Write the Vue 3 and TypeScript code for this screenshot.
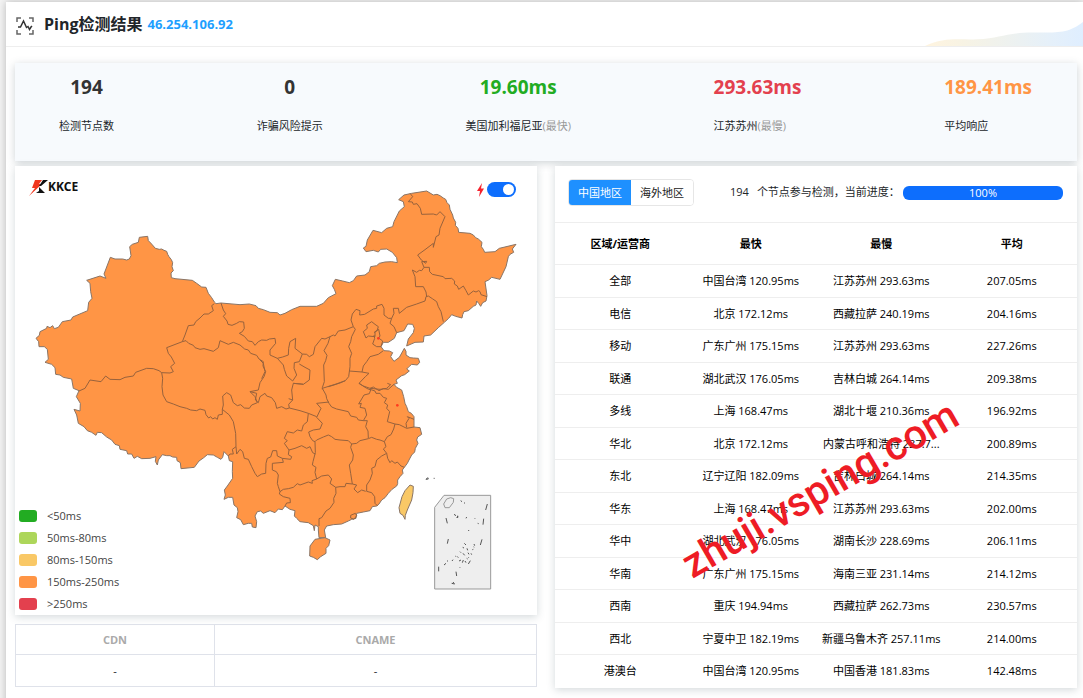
<script setup lang="ts">
import { ref } from 'vue'

interface Stat { value: string; label: string; note?: string; tone: string; align: string }
interface Row { region: string; fast: string; slow: string; avg: string }

const stats: Stat[] = [
  { value: '194', label: '检测节点数', tone: 'dark', align: 'center' },
  { value: '0', label: '诈骗风险提示', tone: 'dark', align: 'center' },
  { value: '19.60ms', label: '美国加利福尼亚', note: '(最快)', tone: 'green', align: 'center' },
  { value: '293.63ms', label: '江苏苏州', note: '(最慢)', tone: 'red', align: 'start' },
  { value: '189.41ms', label: '平均响应', tone: 'orange', align: 'start' },
]

const rows: Row[] = [
  { region: '全部', fast: '中国台湾 120.95ms', slow: '江苏苏州 293.63ms', avg: '207.05ms' },
  { region: '电信', fast: '北京 172.12ms', slow: '西藏拉萨 240.19ms', avg: '204.16ms' },
  { region: '移动', fast: '广东广州 175.15ms', slow: '江苏苏州 293.63ms', avg: '227.26ms' },
  { region: '联通', fast: '湖北武汉 176.05ms', slow: '吉林白城 264.14ms', avg: '209.38ms' },
  { region: '多线', fast: '上海 168.47ms', slow: '湖北十堰 210.36ms', avg: '196.92ms' },
  { region: '华北', fast: '北京 172.12ms', slow: '内蒙古呼和浩特 237.7...', avg: '200.89ms' },
  { region: '东北', fast: '辽宁辽阳 182.09ms', slow: '吉林白城 264.14ms', avg: '214.35ms' },
  { region: '华东', fast: '上海 168.47ms', slow: '江苏苏州 293.63ms', avg: '202.00ms' },
  { region: '华中', fast: '湖北武汉 176.05ms', slow: '湖南长沙 228.69ms', avg: '206.11ms' },
  { region: '华南', fast: '广东广州 175.15ms', slow: '海南三亚 231.14ms', avg: '214.12ms' },
  { region: '西南', fast: '重庆 194.94ms', slow: '西藏拉萨 262.73ms', avg: '230.57ms' },
  { region: '西北', fast: '宁夏中卫 182.19ms', slow: '新疆乌鲁木齐 257.11ms', avg: '214.00ms' },
  { region: '港澳台', fast: '中国台湾 120.95ms', slow: '中国香港 181.83ms', avg: '142.48ms' },
]

const legend = [
  { text: '<50ms', tone: 'l1' },
  { text: '50ms-80ms', tone: 'l2' },
  { text: '80ms-150ms', tone: 'l3' },
  { text: '150ms-250ms', tone: 'l4' },
  { text: '>250ms', tone: 'l5' },
]

const area = ref<'cn' | 'abroad'>('cn')
const live = ref(true)

const outline =
  'M418 712L443 709 445 722 452 729 460 738 466 745 478 748 485 747 492 751 500 754 503 763 507 770 514 779 518 788 516 800 520 812 513 819 514 833 525 836 577 841 590 850 605 861 618 862 625 880 635 893 643 906 648 911 663 909 720 914 748 912 768 917 775 925 790 929 810 937 832 938 840 945 855 940 875 929 900 919 950 919 970 910 985 893 1008 881 1003 868 997 857 1006 838 1028 843 1048 848 1060 842 1070 828 1095 825 1108 815 1112 800 1130 797 1138 790 1155 786 1175 785 1192 788 1190 773 1177 757 1160 747 1142 748 1135 756 1120 751 1098 755 1090 744 1098 739 1102 720 1119 691 1145 698 1160 685 1178 680 1182 665 1198 633 1213 620 1210 605 1196 599 1212 585 1235 580 1280 573 1300 585 1311 583 1320 587 1330 594 1337 598 1341 608 1348 615 1350 628 1358 645 1360 654 1367 667 1366 676 1374 685 1376 697 1410 700 1420 705 1427 713 1435 717 1446 727 1444 740 1450 748 1454 757 1485 755 1498 745 1548 733 1537 747 1541 757 1530 763 1525 770 1518 800 1500 838 1475 832 1466 840 1455 845 1461 887 1458 903 1448 908 1442 919 1436 910 1430 903 1428 915 1420 919 1405 932 1392 935 1388 944 1386 954 1367 949 1355 944 1346 955 1333 967 1315 983 1292 1005 1272 1008 1270 1026 1245 1027 1220 1038 1225 1017 1240 998 1243 985 1238 973 1223 972 1212 992 1190 998 1183 1015 1165 1027 1150 1027 1143 1040 1152 1052 1168 1053 1178 1058 1172 1070 1182 1084 1198 1072 1213 1045 1218 1054 1218 1065 1230 1073 1240 1074 1255 1075 1259 1087 1252 1095 1235 1093 1228 1099 1220 1107 1228 1113 1214 1124 1205 1127 1188 1140 1192 1150 1182 1153 1190 1162 1205 1170 1211 1190 1215 1210 1220 1220 1225 1235 1234 1240 1242 1250 1242 1281 1260 1283 1265 1303 1253 1311 1250 1320 1254 1330 1246 1345 1244 1356 1235 1365 1227 1380 1222 1390 1213 1402 1207 1410 1209 1420 1200 1430 1193 1440 1193 1451 1190 1458 1176 1468 1165 1480 1155 1493 1145 1500 1137 1512 1130 1518 1117 1520 1110 1532 1090 1536 1070 1540 1068 1555 1055 1558 1045 1563 1025 1572 1000 1574 980 1578 973 1590 977 1613 957 1613 955 1590 955 1580 945 1575 943 1592 940 1577 925 1568 900 1565 890 1555 883 1548 885 1532 870 1528 855 1518 847 1529 835 1527 825 1538 810 1532 790 1540 782 1533 772 1535 765 1548 770 1565 768 1583 757 1581 755 1570 745 1570 730 1574 722 1559 710 1553 714 1535 712 1523 702 1515 698 1492 685 1492 672 1498 676 1485 673 1470 682 1458 698 1435 697 1415 698 1385 688 1382 685 1368 672 1355 668 1372 663 1378 652 1372 640 1365 622 1364 610 1374 597 1383 583 1402 543 1406 541 1388 531 1382 530 1372 518 1371 510 1367 500 1367 487 1364 475 1380 472 1395 466 1384 468 1370 450 1375 425 1376 412 1369 402 1375 395 1362 383 1362 380 1352 360 1348 358 1337 345 1333 335 1320 320 1311 305 1298 292 1297 288 1306 275 1297 262 1292 252 1280 235 1270 230 1245 222 1228 240 1233 241 1210 229 1190 237 1172 220 1165 215 1137 190 1132 180 1125 167 1123 165 1103 155 1093 135 1087 145 1078 142 1048 133 1040 117 1040 116 1025 108 1015 118 1006 120 995 140 985 141 979 150 983 158 977 163 986 175 982 187 965 213 960 218 951 263 932 266 907 276 895 272 875 270 850 260 841 300 828 318 835 312 822 331 772 345 777 368 777 380 780 388 777 393 767 389 740 397 733 415 727Z'

const borders = [
  'M643 911L635 917 640 932 625 942 612 942 600 954 587 965 582 975 565 977 555 1005 547 1025 500 1043 505 1060 514 1071 524 1090 512 1100 520 1115 510 1119 485 1118',
  'M485 1118L477 1112 460 1106 440 1105 407 1117 400 1128 375 1132 360 1139 330 1138 317 1128 303 1145 270 1140 255 1165 237 1173',
  'M485 1118L488 1135 486 1160 489 1185 500 1205 520 1212 540 1220 560 1225 572 1230 590 1232 600 1227 615 1231 618 1244 626 1254 632 1250 638 1257 645 1253 652 1258 655 1245 667 1243 667 1228',
  'M547 1025L558 1022 566 1030 580 1036 585 1043 600 1048 612 1046 640 1054 655 1043 660 1022 685 1033 700 1027 720 1035 734 1047 745 1050 752 1060 770 1066 777 1077 790 1085 789 1098 797 1115 792 1130 780 1148 775 1170 750 1175 765 1190 772 1208 755 1215 748 1225 733 1224 722 1214 712 1217 700 1208 692 1185 680 1178 668 1188 670 1215 667 1228',
  'M663 909L670 930 677 941 670 949 681 963 684 973 696 976 710 970 718 965 731 966 733 985 727 995 718 1000 733 1009 745 1023 757 1025 765 1036 775 1025 785 1020 800 1021 808 1017 825 1015 827 1030 810 1050 810 1065 832 1075',
  'M832 1075L848 1071 865 1065 866 1045 870 1025 887 1015 885 1045 907 1062 898 1085 883 1088 882 1105 890 1125 878 1143 860 1128 853 1108 850 1095Z',
  'M898 1092L915 1102 930 1110 928 1140 910 1153 880 1150 875 1170 878 1200 866 1213 868 1224',
  'M907 1062L920 1063 928 1070 940 1063 945 1040 965 1015 975 1017 990 1010 1000 1005 1005 1008 1015 993 1035 990 1060 980',
  'M990 1010L984 1030 972 1052 981 1066 977 1082 971 1095 973 1145 967 1163 967 1168',
  'M1060 980L1066 988 1055 1010 1052 1025 1046 1040 1055 1060 1050 1075 1050 1100 1046 1130 1036 1142 1008 1152 967 1165',
  'M1060 980L1053 960 1057 942 1068 928 1080 932 1079 945 1094 943 1120 927 1130 925 1130 918 1146 913 1152 925 1152 945 1165 955 1175 955 1170 970 1182 980 1190 998',
  'M1175 955L1182 940 1180 925 1195 925 1198 940 1220 922 1250 912 1275 903 1278 890 1285 888 1297 896 1310 905 1315 920 1323 935 1330 965',
  'M1280 890L1278 876 1270 860 1247 860 1245 830 1237 810 1250 817 1258 811 1265 812 1272 802 1288 802 1289 815 1297 823 1330 830 1335 836 1355 835 1364 843 1363 852 1372 858 1376 868 1390 858 1398 872 1405 885 1420 873 1428 876 1436 872 1440 875 1443 884 1461 890',
  'M1272 802L1265 785 1280 784 1277 790 1264 780 1253 765 1275 749 1300 730 1300 742 1308 710 1317 705 1320 685 1335 650 1320 635 1310 645 1300 642 1265 643 1261 625 1251 611 1240 613 1237 606 1225 605 1238 590 1231 581',
  'M1090 995L1102 985 1100 975 1115 965 1125 973 1135 980 1131 992 1125 995 1125 1010 1105 1008 1098 1014Z',
  'M1122 998L1136 988 1140 1008 1136 1014 1148 1023 1143 1040 1130 1040 1118 1032 1124 1015 1122 1005',
  'M1150 1052L1135 1063 1110 1070 1100 1085 1090 1098 1086 1116 1048 1113M1086 1116L1107 1120 1096 1130 1077 1150 1090 1158 1110 1165 1120 1161 1137 1172 1150 1166 1165 1168 1176 1158 1182 1153',
  'M967 1165L978 1185 980 1196 987 1210 995 1221 1010 1227 1045 1235 1052 1248 1070 1252 1075 1260 1090 1262 1100 1245 1095 1225 1080 1222 1084 1210 1076 1212 1092 1185 1108 1181 1112 1170 1100 1165 1077 1150',
  'M1110 1168L1125 1173 1128 1180 1140 1180 1150 1192 1160 1195 1153 1208 1163 1215 1160 1225 1169 1235 1162 1265 1185 1272 1198 1274 1220 1285 1242 1281',
  'M1110 1165L1140 1168 1160 1165 1172 1154 1162 1150M1220 1283L1218 1270 1227 1255 1222 1250 1242 1258',
  'M1185 1272L1181 1287 1173 1304 1162 1310 1153 1325 1140 1320 1130 1318 1115 1312 1105 1316 1080 1322 1070 1330 1055 1332 1045 1322 1020 1320 1005 1318 995 1310 985 1305 970 1311 950 1320 945 1325 938 1322 930 1310 926 1296 940 1290 960 1287 967 1270 950 1252 963 1225 950 1210 987 1206',
  'M1090 1262L1102 1262 1097 1280 1104 1293 1105 1314',
  'M945 1325L946 1358 939 1385 937 1395 948 1402 945 1417 950 1437 965 1428 985 1425 995 1437 990 1450 1007 1462 1020 1460 1035 1460 1038 1450 1057 1452M1055 1332L1052 1342 1060 1365 1058 1380 1048 1395 1052 1420 1057 1452 1070 1455 1062 1467 1073 1478 1085 1470 1097 1474',
  'M1153 1325L1158 1340 1150 1347 1160 1360 1145 1368 1130 1380 1125 1400 1115 1405 1117 1420 1110 1440 1100 1455 1100 1474 1115 1478 1124 1490 1125 1510 1133 1518',
  'M1160 1360L1163 1375 1170 1388 1175 1382 1185 1390 1192 1386 1203 1398 1213 1402',
  'M1007 1462L1008 1480 1001 1495 1002 1507 990 1525 978 1533 965 1553 957 1556 957 1578',
  'M950 1437L936 1442 937 1450 925 1446 900 1455 892 1451 880 1462 865 1466 850 1468 840 1475 838 1482 850 1490 870 1495 871 1508 860 1509 855 1518',
  'M840 1475L835 1460 832 1450 835 1425 829 1415 817 1410 817 1390 850 1387 847 1375 872 1378 875 1370 865 1364 867 1350 885 1345 905 1337 920 1345 930 1340 938 1358 946 1362',
  'M847 1375L832 1368 830 1352 818 1352 812 1371 802 1375 798 1390 797 1420 785 1422 772 1430 765 1420 755 1400 745 1378 733 1375 728 1355 720 1348 710 1362 708 1340 707 1300 700 1265 688 1245 667 1228',
  'M708 1340L697 1348 700 1362 690 1362 685 1368M867 1350L853 1330 862 1322 853 1315 862 1295 880 1299 892 1290 905 1293 910 1275 922 1265 925 1240 950 1250',
  'M750 1175L770 1180 766 1200 775 1208 780 1190 795 1180 800 1188 815 1193 826 1208 830 1225 845 1220 858 1227 868 1224 900 1232 925 1240',
  'M780 1080L790 1090 795 1115 785 1136M878 1200L866 1196M880 1150L905 1152 910 1153M985 1160L1002 1155 1020 1149 1036 1142',
  'M1052 1546L1066 1540 1070 1547 1062 1558 1052 1554Z',
]

const islands =
  'M1382 1502l4 3M1392 1508l3 2M1462 1512l-5 18M1338 1554l4 16M1451 1556l-2 18M1345 1617l-3 14M1446 1618l-5 17M1316 1700v14M1338 1690l-6 5M1344 1682l-3 2M1362 1543l6 4M1370 1554l4-6M1373 1547v7M1398 1555l2-4M1424 1554l1 2M1433 1570l3 1M1406 1590v3M1393 1630l5 5M1388 1642l4 2M1401 1645l2 6M1422 1632l2 5M1417 1649l3-1M1413 1660l2 4M1380 1655l3 3M1389 1660l5 6M1404 1658l3 5M1371 1669l4 4M1359 1679l-3 4M1377 1683l6-3M1390 1680l-3 8M1395 1683l3 5M1400 1675l3 2M1411 1682l-6 10M1368 1715l2 13M1379 1701l1 2M1355 1750l9 2M1359 1746l4 5M1421 1640l1 2M1365 1668l2 1M1405 1671l1 2'
</script>

<template>
  <main class="page">
    <header class="top">
      <svg class="scan" viewBox="0 0 20 20" aria-hidden="true">
        <path d="M2 6V2h4M14 2h4v4M2 14v4h4M14 18h4v-4" />
        <path class="pulse" d="M3 11h2.500l3-6 3 6.500 1.500-1 1.500 3 1.500-2.500 1-1" />
      </svg>
      <h1>Ping检测结果</h1>
      <a class="ip" href="#">46.254.106.92</a>
      <svg class="wave" viewBox="0 0 158 25" preserveAspectRatio="none" aria-hidden="true">
        <defs>
          <linearGradient id="wave-fill">
            <stop offset="0" stop-color="#fff4df" />
            <stop offset="0.25" stop-color="#f7f3e4" />
            <stop offset="0.8" stop-color="#e5f0fa" />
            <stop offset="1" stop-color="#dfeeff" />
          </linearGradient>
        </defs>
        <path d="M0 25C20 15 36 19 52 18C76 17 80 11 108 11C134 11 143 12 158 0V25Z" fill="url(#wave-fill)" />
      </svg>
    </header>

    <section class="stats">
      <div v-for="s in stats" :key="s.label" class="stat" :class="s.align">
        <strong :class="s.tone">{{ s.value }}</strong>
        <span>{{ s.label }}<em v-if="s.note">{{ s.note }}</em></span>
      </div>
    </section>

    <div class="columns">
      <div class="left">
        <section class="card map">
          <svg class="china" viewBox="45 498 1566 1347" role="img" aria-label="中国地区延迟地图">
            <path class="land" :d="outline" />
            <path v-for="(b, i) in borders" :key="i" class="border" :d="b" />
            <path class="land" d="M945 1618L957 1616 975 1613 990 1620 986 1637 978 1645 978 1660 962 1670 952 1679 940 1672 929 1668 930 1638Z" />
            <path class="land taiwan" d="M1230 1455L1240 1459 1239 1478 1235 1500 1222 1530 1216 1546 1215 1558 1209 1546 1200 1540 1197 1523 1206 1490 1215 1472Z" />
            <path class="inset" d="M1332 1486H1472V1767H1304V1522Z" />
            <path class="inset" d="M1331 1512L1340 1497 1352 1493 1361 1496 1360 1507 1348 1523 1335 1523Z" />
            <path class="isles" :d="islands" />
            <path class="isles" d="M1278 1438l5-5 2 4zM1301 1435h3" />
            <circle class="dot" cx="1135" cy="1015" r="4" />
            <circle class="dot" cx="1192" cy="1216" r="4" />
          </svg>
          <svg class="logo" viewBox="0 0 54 18" role="img" aria-label="KKCE">
            <path d="M7 1h7l-3 4h3L1 17l6-8H4z" fill="#f0371e" />
            <path d="M15 1h5l-7 6h-2zM11 8l6 6H8l3-2z" fill="#111" />
            <text x="20" y="12">KKCE</text>
          </svg>
          <label class="switch">
            <svg viewBox="0 0 9 14" aria-hidden="true"><path d="M6 0L1 8h3L3 14 8 5.500H5z" fill="#f5222d" /></svg>
            <input v-model="live" type="checkbox" role="switch" aria-label="实时刷新" />
          </label>
          <ul class="legend">
            <li v-for="l in legend" :key="l.text"><i :class="l.tone"></i>{{ l.text }}</li>
          </ul>
        </section>

        <table class="cdn">
          <thead><tr><th class="narrow">CDN</th><th>CNAME</th></tr></thead>
          <tbody><tr><td>-</td><td>-</td></tr></tbody>
        </table>
      </div>

      <section class="card results">
        <div class="toolbar">
          <div class="tabs">
            <button type="button" :class="{ active: area === 'cn' }" @click="area = 'cn'">中国地区</button>
            <button type="button" :class="{ active: area === 'abroad' }" @click="area = 'abroad'">海外地区</button>
          </div>
          <p><span>194</span><span>个节点参与检测，当前进度：</span></p>
          <div class="bar" role="progressbar" aria-valuenow="100">100%</div>
        </div>
        <table class="list">
          <thead><tr><th>区域/运营商</th><th>最快</th><th>最慢</th><th>平均</th></tr></thead>
          <tbody>
            <tr v-for="r in rows" :key="r.region">
              <td>{{ r.region }}</td><td>{{ r.fast }}</td><td>{{ r.slow }}</td><td>{{ r.avg }}</td>
            </tr>
          </tbody>
        </table>
        <span class="mark">zhuji.vsping.com</span>
      </section>
    </div>
  </main>
</template>

<style>
body {
  margin: 0;
  background: #f4f4f4;
}
</style>

<style scoped>
.page {
  margin: 2px 0 0 6px;
  padding-bottom: 20px;
  background: #fff;
  box-shadow: 0 0 8px rgba(0, 0, 0, 0.25);
  font: 11px/16px "Open Sans", "Noto Sans CJK SC", sans-serif;
  color: #212529;
}
.top {
  position: relative;
  display: flex;
  align-items: center;
  height: 44px;
  padding-left: 9px;
  border-bottom: 1px solid #eee;
}
.scan {
  width: 20px;
  height: 20px;
  margin: 3px 9px 0 0;
  fill: none;
  stroke: #666;
  stroke-width: 1.5;
}
.pulse {
  stroke: #333;
}
h1 {
  margin: 0;
  font-size: 16px;
  line-height: 24px;
  font-weight: 700;
}
.ip {
  margin-left: 5px;
  font-size: 13px;
  line-height: 20px;
  font-weight: 700;
  color: #1e9fff;
  text-decoration: none;
}
.wave {
  position: absolute;
  right: 0;
  bottom: 0;
  width: 158px;
  height: 24px;
}
.stats {
  display: flex;
  justify-content: space-between;
  margin: 16px 6px 0 9px;
  padding: 11px 45px 27px 44px;
  background: #f7fafd;
  box-shadow: 0 2px 8px rgba(60, 80, 90, 0.25);
}
.stat {
  display: flex;
  flex-direction: column;
  align-items: center;
  gap: 18px;
}
.stat.start {
  align-items: flex-start;
}
.stat strong {
  font-size: 19px;
  line-height: 26px;
}
.stat em {
  font-style: normal;
  color: #999;
}
.dark {
  color: #333;
}
.green {
  color: #22ac22;
}
.red {
  color: #e3404e;
}
.orange {
  color: #ff9545;
}
.columns {
  display: grid;
  grid-template-columns: minmax(0, 1fr) minmax(0, 1fr);
  gap: 18px;
  margin: 5px 6px 0 9px;
}
.card {
  position: relative;
  background: #fff;
  box-shadow: 0 2px 8px rgba(60, 80, 90, 0.22);
}
.china {
  display: block;
  width: 100%;
}
.land {
  fill: #ff9545;
  stroke: #8a7566;
  stroke-width: 3;
  stroke-linejoin: round;
}
.border {
  fill: none;
  stroke: #98623c;
  stroke-width: 3;
  stroke-linejoin: round;
}
.taiwan {
  fill: #f9c866;
}
.inset {
  fill: #eee;
  stroke: #999;
  stroke-width: 3;
}
.isles {
  fill: none;
  stroke: #555;
  stroke-width: 3;
}
.dot {
  fill: #ff3b1f;
}
.logo {
  position: absolute;
  left: 13px;
  top: 13px;
  width: 54px;
  height: 18px;
}
.logo text {
  font: 700 12px "Noto Sans", sans-serif;
  fill: #111;
}
.switch {
  position: absolute;
  top: 16px;
  right: 21px;
  display: flex;
  align-items: center;
  gap: 2px;
}
.switch svg {
  width: 9px;
  height: 14px;
}
.switch input {
  appearance: none;
  width: 29px;
  height: 15px;
  margin: 0;
  padding: 2px;
  border-radius: 8px;
  background: #bbb;
  display: flex;
}
.switch input::before {
  content: "";
  width: 11px;
  height: 11px;
  border-radius: 50%;
  background: #fff;
}
.switch input:checked {
  justify-content: flex-end;
  background: #0d6efd;
}
.legend {
  position: absolute;
  left: 4px;
  bottom: 0;
  margin: 0;
  padding: 0;
  list-style: none;
  color: #444;
}
.legend li {
  display: flex;
  align-items: center;
  gap: 10px;
  height: 22px;
}
.legend i {
  width: 18px;
  height: 12px;
  border-radius: 3px;
}
.l1 {
  background: #22ac22;
}
.l2 {
  background: #add65a;
}
.l3 {
  background: #f9c866;
}
.l4 {
  background: #ff9545;
}
.l5 {
  background: #e3404e;
}
table {
  width: 100%;
  border-collapse: collapse;
  table-layout: fixed;
}
th,
td {
  padding: 0;
  text-align: center;
}
.cdn {
  margin-top: 9px;
}
.cdn th,
.cdn td {
  height: 29px;
  border: 1px solid #dfe2ea;
}
.cdn th {
  color: #aaa;
}
.cdn td {
  height: 31px;
}
.cdn .narrow {
  width: 198px;
}
.toolbar {
  display: flex;
  align-items: center;
  height: 56px;
  padding: 0 14px 0 13px;
  box-sizing: border-box;
}
.tabs {
  display: flex;
  margin-top: -3px;
  border: 1px solid #e6e6e6;
  border-radius: 4px;
  overflow: hidden;
}
.tabs button {
  height: 25px;
  padding: 0 9px;
  border: 0;
  background: #fff;
  font: inherit;
  color: #222;
}
.tabs .active {
  background: #1e90ff;
  color: #fff;
}
.toolbar p {
  display: flex;
  gap: 8px;
  margin: -4px 0 0 36px;
  white-space: nowrap;
}
.bar {
  width: 160px;
  height: 14px;
  margin: -3px 0 0 auto;
  border-radius: 6px;
  background: #0d6efd;
  color: #fff;
  line-height: 13px;
  text-align: center;
}
.list {
  color: #000;
}
.list th,
.list td {
  box-sizing: border-box;
  height: 32px;
  padding: 0 4px;
  border-top: 1px solid #eee;
  white-space: nowrap;
}
.list th {
  height: 42px;
}
.list tbody tr:nth-child(odd) td {
  height: 33px;
}
.mark {
  position: absolute;
  left: 265px;
  top: 323px;
  transform: translate(-50%, -50%) rotate(-30deg);
  font: 500 41px/48px Roboto, sans-serif;
  color: #ee1c25;
  white-space: nowrap;
  pointer-events: none;
}
</style>
